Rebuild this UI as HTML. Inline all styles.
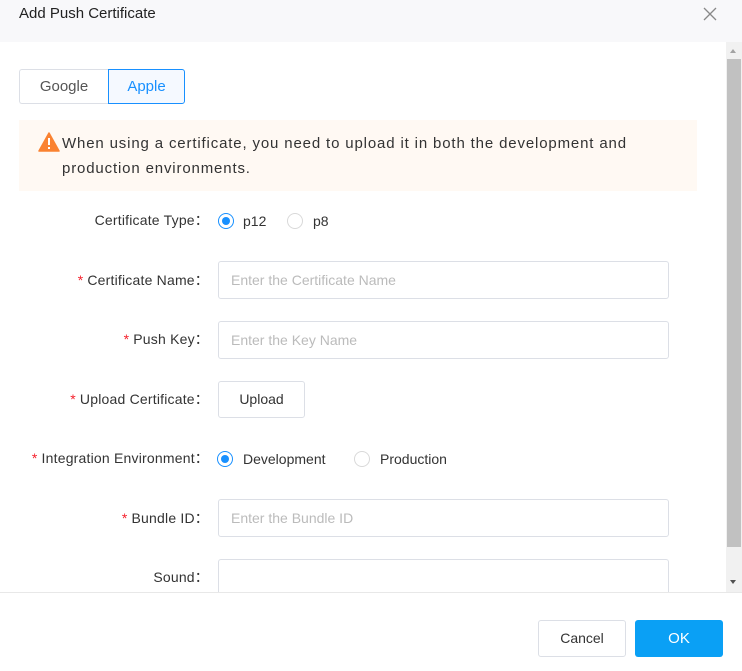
<!DOCTYPE html>
<html><head><style>
*{box-sizing:border-box;margin:0;padding:0}
body{width:742px;height:671px;overflow:hidden;background:#fff;font-family:"Liberation Sans",sans-serif;color:#333;position:relative;font-size:14px}
.a{position:absolute}
.hdr{left:0;top:0;width:742px;height:42px;background:#f8f8fa}
.lbl{right:533px;text-align:right;font-size:14px;color:#333;white-space:nowrap;line-height:20px;letter-spacing:0.2px}
.lbl .s{color:#f5222d;margin-right:4px}
.inp{left:218px;width:451px;height:38px;border:1px solid #dcdfe6;border-radius:3px;font-size:14px;color:#bbb;padding-left:12px;line-height:36px}
.radio{width:16px;height:16px;border-radius:50%;border:1px solid #d9d9d9;background:#fff}
.radio.on{border-color:#1890ff}
.radio.on::after{content:"";position:absolute;left:3px;top:3px;width:8px;height:8px;border-radius:50%;background:#1890ff}
.rt{font-size:14px;line-height:20px;color:#333}
</style></head><body>
<div class="a hdr"></div>
<div class="a" style="left:19px;top:5px;font-size:15px;color:#222">Add Push Certificate</div>
<svg class="a" style="left:703px;top:7px" width="14" height="14"><path d="M1 1L13 13M13 1L1 13" stroke="#888" stroke-width="1.3"/></svg>
<div class="a" style="left:726px;top:42px;width:16px;height:550px;background:#f1f1f1"></div>
<div class="a" style="left:727px;top:59px;width:14px;height:488px;background:#c1c1c1"></div>
<svg class="a" style="left:729px;top:48px" width="8" height="6"><path d="M1 5L4 1L7 5Z" fill="#a3a3a3"/></svg>
<svg class="a" style="left:729px;top:579px" width="8" height="6"><path d="M1 1L4 5L7 1Z" fill="#505050"/></svg>

<div class="a" style="left:19px;top:69px;width:89px;height:35px;border:1px solid #dcdfe6;border-right:none;border-radius:3px 0 0 3px;text-align:center;line-height:33px;font-size:15px;color:#555">Google</div>
<div class="a" style="left:108px;top:69px;width:77px;height:35px;border:1px solid #1890ff;background:#f5f9ff;border-radius:0 3px 3px 0;text-align:center;line-height:33px;font-size:15px;color:#1890ff">Apple</div>

<div class="a" style="left:19px;top:120px;width:678px;height:71px;background:#fff9f3"></div>
<svg class="a" style="left:38px;top:132px" width="22" height="20"><path d="M11 1L21 19H1Z" fill="#fa8231" stroke="#fa8231" stroke-linejoin="round" stroke-width="1.5"/><rect x="10" y="6" width="2" height="7" fill="#fff"/><rect x="10" y="15" width="2" height="2" fill="#fff"/></svg>
<div class="a" style="left:62px;top:131px;font-size:15px;line-height:25px;color:#333;width:640px;white-space:nowrap;letter-spacing:0.85px">When using a certificate, you need to upload it in both the development and<br>production environments.</div>

<div class="a lbl" style="top:210px">Certificate Type：</div>
<div class="a radio on" style="left:218px;top:213px"></div><div class="a rt" style="left:243px;top:211px">p12</div>
<div class="a radio" style="left:287px;top:213px"></div><div class="a rt" style="left:313px;top:211px">p8</div>

<div class="a lbl" style="top:270px"><span class="s">*</span>Certificate Name：</div>
<div class="a inp" style="top:261px">Enter the Certificate Name</div>
<div class="a lbl" style="top:329px"><span class="s">*</span>Push Key：</div>
<div class="a inp" style="top:321px">Enter the Key Name</div>
<div class="a lbl" style="top:389px"><span class="s">*</span>Upload Certificate：</div>
<div class="a" style="left:218px;top:381px;width:87px;height:37px;border:1px solid #dcdfe6;border-radius:3px;text-align:center;line-height:35px;color:#333">Upload</div>
<div class="a lbl" style="top:448px"><span class="s">*</span>Integration Environment：</div>
<div class="a radio on" style="left:217px;top:451px"></div><div class="a rt" style="left:243px;top:449px">Development</div>
<div class="a radio" style="left:354px;top:451px"></div><div class="a rt" style="left:380px;top:449px">Production</div>
<div class="a lbl" style="top:508px"><span class="s">*</span>Bundle ID：</div>
<div class="a inp" style="top:499px">Enter the Bundle ID</div>
<div class="a lbl" style="top:567px">Sound：</div>
<div class="a inp" style="top:559px;height:33px;border-bottom:none;border-radius:3px 3px 0 0"></div>

<div class="a" style="left:0;top:592px;width:742px;height:79px;background:#fff;border-top:1px solid #e8e8e8"></div>
<div class="a" style="left:538px;top:620px;width:88px;height:37px;border:1px solid #dcdfe6;border-radius:3px;text-align:center;line-height:35px;color:#333">Cancel</div>
<div class="a" style="left:635px;top:620px;width:88px;height:37px;background:#0aa0f5;border-radius:3px;text-align:center;line-height:37px;color:#fff;font-size:15px">OK</div>
</body></html>
